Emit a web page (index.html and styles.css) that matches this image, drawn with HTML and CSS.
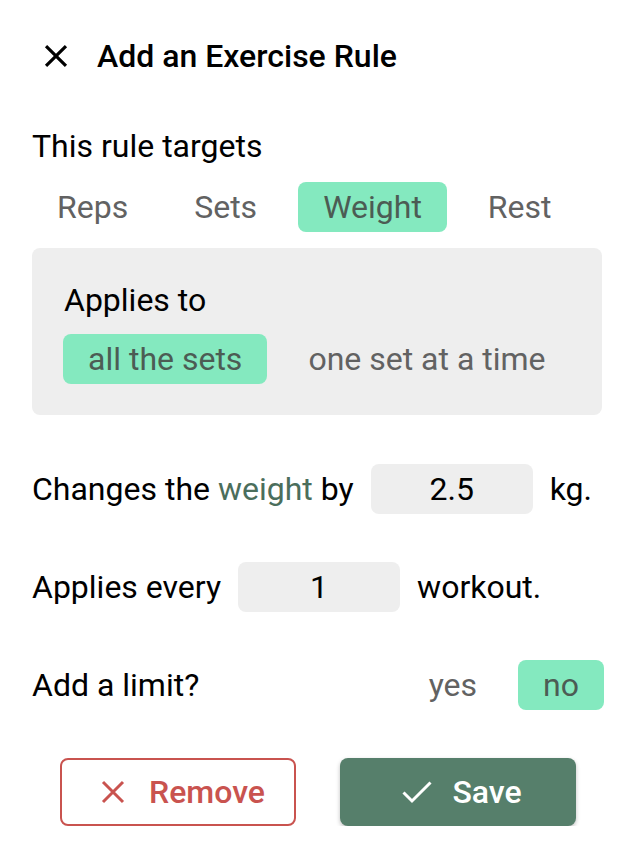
FILE: index.html
```html
<!DOCTYPE html>
<html>
<head>
<meta charset="utf-8">
<link rel="stylesheet" href="styles.css">
</head>
<body>
<div class="page">
  <div class="header">
    <svg class="close-icon" viewBox="0 0 24 24" width="38" height="38"><path d="M19 6.41L17.59 5 12 10.59 6.41 5 5 6.41 10.59 12 5 17.59 6.41 19 12 13.41 17.59 19 19 17.59 13.41 12z" fill="#000"/></svg>
    <div class="title">Add an Exercise Rule</div>
  </div>

  <div class="label">This rule targets</div>
  <div class="chips">
    <div class="chip">Reps</div>
    <div class="chip">Sets</div>
    <div class="chip selected">Weight</div>
    <div class="chip">Rest</div>
  </div>

  <div class="box">
    <div class="label">Applies to</div>
    <div class="chips box-chips">
      <div class="chip selected">all the sets</div>
      <div class="chip">one set at a time</div>
    </div>
  </div>

  <div class="row row-changes">
    <span>Changes the <span class="accent">weight</span> by</span>
    <div class="input">2.5</div>
    <span>kg.</span>
  </div>

  <div class="row">
    <span>Applies every</span>
    <div class="input">1</div>
    <span>workout.</span>
  </div>

  <div class="row limit">
    <span>Add a limit?</span>
    <div class="chips">
      <div class="chip">yes</div>
      <div class="chip selected">no</div>
    </div>
  </div>

  <div class="buttons">
    <div class="btn btn-remove">
      <svg viewBox="0 0 24 24" width="24" height="24"><path d="M2 2L22 22M22 2L2 22" stroke="#c9534f" stroke-width="3" fill="none"/></svg>
      <span>Remove</span>
    </div>
    <div class="btn btn-save">
      <svg viewBox="0 0 30 24" width="30" height="24"><path d="M1.5 12.5L10 21L28.5 2.5" stroke="#fff" stroke-width="3" fill="none"/></svg>
      <span>Save</span>
    </div>
  </div>
</div>
</body>
</html>
```

FILE: styles.css
```css
* { box-sizing: border-box; }
html, body { margin: 0; padding: 0; background: #fff; }
body {
  font-family: Roboto, "Noto Sans", sans-serif;
  font-size: 32px;
  line-height: 38px;
  color: #000;
}
.page {
  width: 636px;
  padding: 0 32px;
}
.header {
  height: 112px;
  display: flex;
  align-items: center;
}
.close-icon {
  margin-left: 5px;
  flex: none;
}
.title {
  margin-left: 22px;
  font-weight: 500;
}
.label {
  margin-top: 15px;
}
.chips {
  display: flex;
  gap: 16px;
  margin-top: 17px;
}
.chip {
  height: 50px;
  line-height: 50px;
  padding: 0 25px;
  border-radius: 8px;
  color: #626262;
  white-space: nowrap;
}
.chip.selected {
  background: #84e9bf;
  color: #4c5c54;
}
.box {
  margin-top: 16px;
  width: 570px;
  background: #eeeeee;
  border-radius: 8px;
  padding: 18px 32px 31px;
}
.box .label {
  margin-top: 15px;
}
.box-chips {
  margin-top: 15px;
  margin-left: -1px;
}
.row {
  display: flex;
  align-items: center;
  height: 50px;
  margin-top: 48px;
  white-space: nowrap;
}
.row-changes {
  margin-top: 49px;
}
.accent { color: #4b6e5c; }
.input {
  width: 162px;
  height: 50px;
  line-height: 50px;
  text-align: center;
  background: #eeeeee;
  border-radius: 8px;
  margin: 0 17px;
}
.limit {
  justify-content: space-between;
}
.limit .chips {
  margin-top: 0;
}
.buttons {
  display: flex;
  justify-content: center;
  gap: 44px;
  margin-top: 48px;
}
.btn {
  width: 236px;
  height: 68px;
  border-radius: 8px;
  display: flex;
  align-items: center;
  justify-content: center;
  gap: 24px;
  font-weight: 500;
}
.btn-remove {
  border: 2px solid #c9534f;
  color: #c9534f;
  padding-left: 10px;
}
.btn-save {
  background: #567f6b;
  color: #fff;
  gap: 20px;
  padding-left: 8px;
  box-shadow: 0 2px 4px rgba(0,0,0,0.25);
}
```
